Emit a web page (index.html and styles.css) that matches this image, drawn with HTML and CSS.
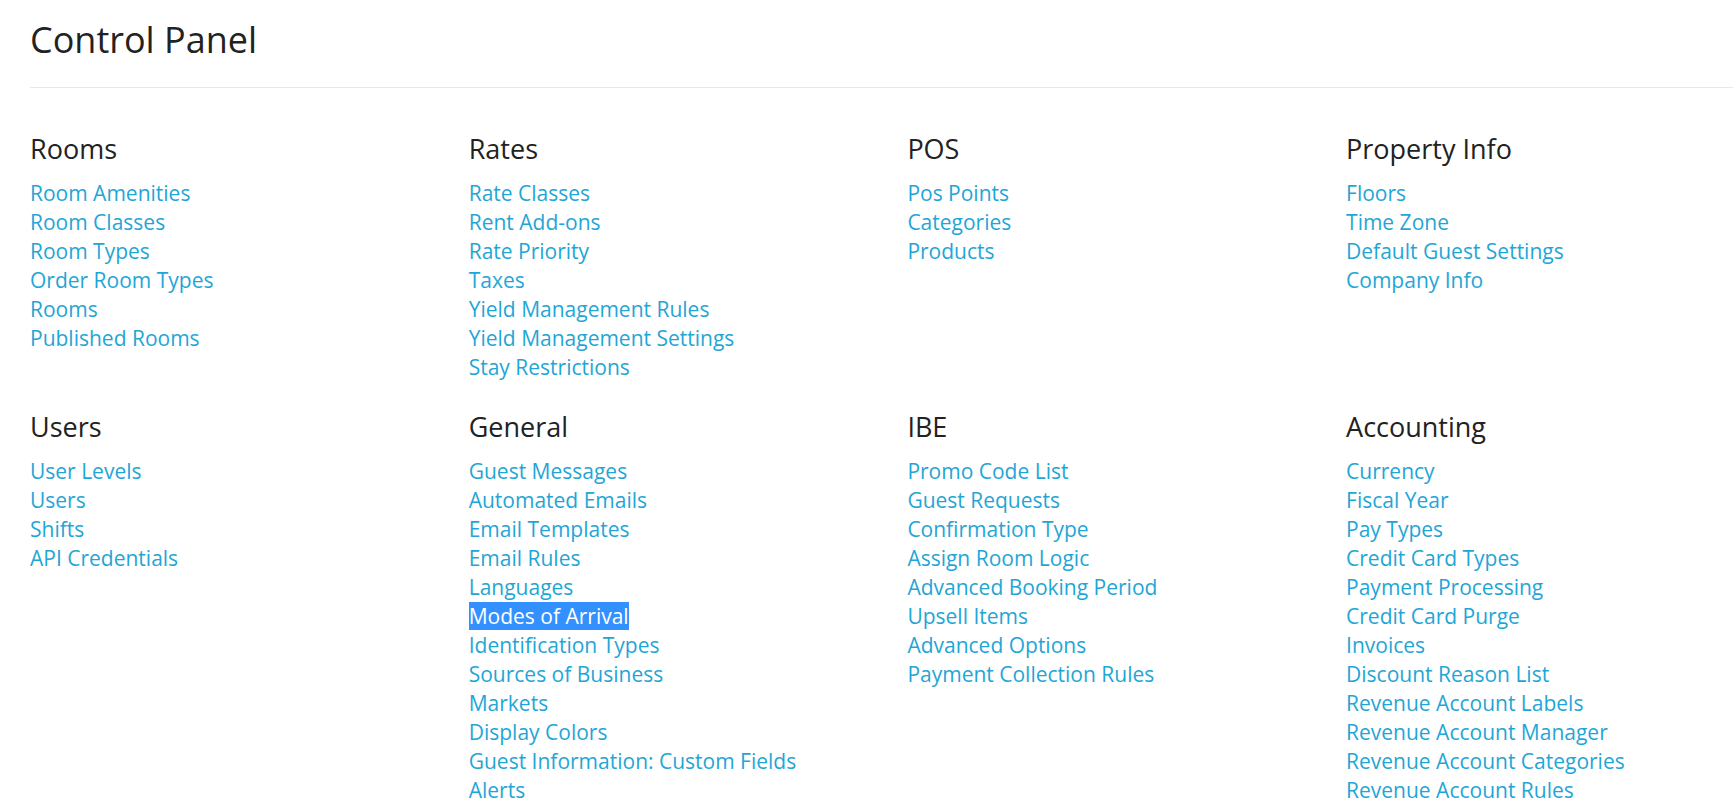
FILE: index.html
```html
<!DOCTYPE html>
<html>
<head>
<meta charset="utf-8">
<link rel="stylesheet" href="styles.css">
</head>
<body>
<div class="page">
  <h1 class="title">Control Panel</h1>
  <div class="divider"></div>
  <div class="grid">
    <section class="group">
      <h2 class="group-title">Rooms</h2>
      <ul class="links">
        <li><a>Room Amenities</a></li>
        <li><a>Room Classes</a></li>
        <li><a>Room Types</a></li>
        <li><a>Order Room Types</a></li>
        <li><a>Rooms</a></li>
        <li><a>Published Rooms</a></li>
      </ul>
    </section>
    <section class="group">
      <h2 class="group-title">Rates</h2>
      <ul class="links">
        <li><a>Rate Classes</a></li>
        <li><a>Rent Add-ons</a></li>
        <li><a>Rate Priority</a></li>
        <li><a>Taxes</a></li>
        <li><a>Yield Management Rules</a></li>
        <li><a>Yield Management Settings</a></li>
        <li><a>Stay Restrictions</a></li>
      </ul>
    </section>
    <section class="group">
      <h2 class="group-title">POS</h2>
      <ul class="links">
        <li><a>Pos Points</a></li>
        <li><a>Categories</a></li>
        <li><a>Products</a></li>
      </ul>
    </section>
    <section class="group">
      <h2 class="group-title">Property Info</h2>
      <ul class="links">
        <li><a>Floors</a></li>
        <li><a>Time Zone</a></li>
        <li><a>Default Guest Settings</a></li>
        <li><a>Company Info</a></li>
      </ul>
    </section>
    <section class="group">
      <h2 class="group-title">Users</h2>
      <ul class="links">
        <li><a>User Levels</a></li>
        <li><a>Users</a></li>
        <li><a>Shifts</a></li>
        <li><a>API Credentials</a></li>
      </ul>
    </section>
    <section class="group">
      <h2 class="group-title">General</h2>
      <ul class="links">
        <li><a>Guest Messages</a></li>
        <li><a>Automated Emails</a></li>
        <li><a>Email Templates</a></li>
        <li><a>Email Rules</a></li>
        <li><a>Languages</a></li>
        <li><a class="selected">Modes of Arrival</a></li>
        <li><a>Identification Types</a></li>
        <li><a>Sources of Business</a></li>
        <li><a>Markets</a></li>
        <li><a>Display Colors</a></li>
        <li><a>Guest Information: Custom Fields</a></li>
        <li><a>Alerts</a></li>
      </ul>
    </section>
    <section class="group">
      <h2 class="group-title">IBE</h2>
      <ul class="links">
        <li><a>Promo Code List</a></li>
        <li><a>Guest Requests</a></li>
        <li><a>Confirmation Type</a></li>
        <li><a>Assign Room Logic</a></li>
        <li><a>Advanced Booking Period</a></li>
        <li><a>Upsell Items</a></li>
        <li><a>Advanced Options</a></li>
        <li><a>Payment Collection Rules</a></li>
      </ul>
    </section>
    <section class="group">
      <h2 class="group-title">Accounting</h2>
      <ul class="links">
        <li><a>Currency</a></li>
        <li><a>Fiscal Year</a></li>
        <li><a>Pay Types</a></li>
        <li><a>Credit Card Types</a></li>
        <li><a>Payment Processing</a></li>
        <li><a>Credit Card Purge</a></li>
        <li><a>Invoices</a></li>
        <li><a>Discount Reason List</a></li>
        <li><a>Revenue Account Labels</a></li>
        <li><a>Revenue Account Manager</a></li>
        <li><a>Revenue Account Categories</a></li>
        <li><a>Revenue Account Rules</a></li>
      </ul>
    </section>
  </div>
</div>
</body>
</html>
```

FILE: styles.css
```css
html, body {
  margin: 0;
  padding: 0;
  background: #fff;
  overflow: hidden;
}
body {
  font-family: "Open Sans", "Liberation Sans", sans-serif;
  color: #222;
}
.page {
  padding: 0 0 0 30px;
}
.title {
  margin: 0;
  padding-top: 16px;
  font-size: 36px;
  font-weight: 400;
  line-height: 48px;
  color: #222;
}
.divider {
  margin-top: 23px;
  height: 1px;
  background: #e8e8e8;
}
.grid {
  display: grid;
  grid-template-columns: repeat(4, 438.7px);
  row-gap: 27px;
  padding-top: 43px;
}
.group-title {
  margin: 0;
  font-size: 27px;
  font-weight: 400;
  line-height: 36px;
  color: #222;
}
.links {
  list-style: none;
  margin: 12px 0 0;
  padding: 0;
}
.links li {
  font-size: 21px;
  line-height: 29px;
}
.links a {
  color: #1fa6d6;
  text-decoration: none;
}
.links a.selected {
  background: #3390ff;
  color: #fff;
}
```
